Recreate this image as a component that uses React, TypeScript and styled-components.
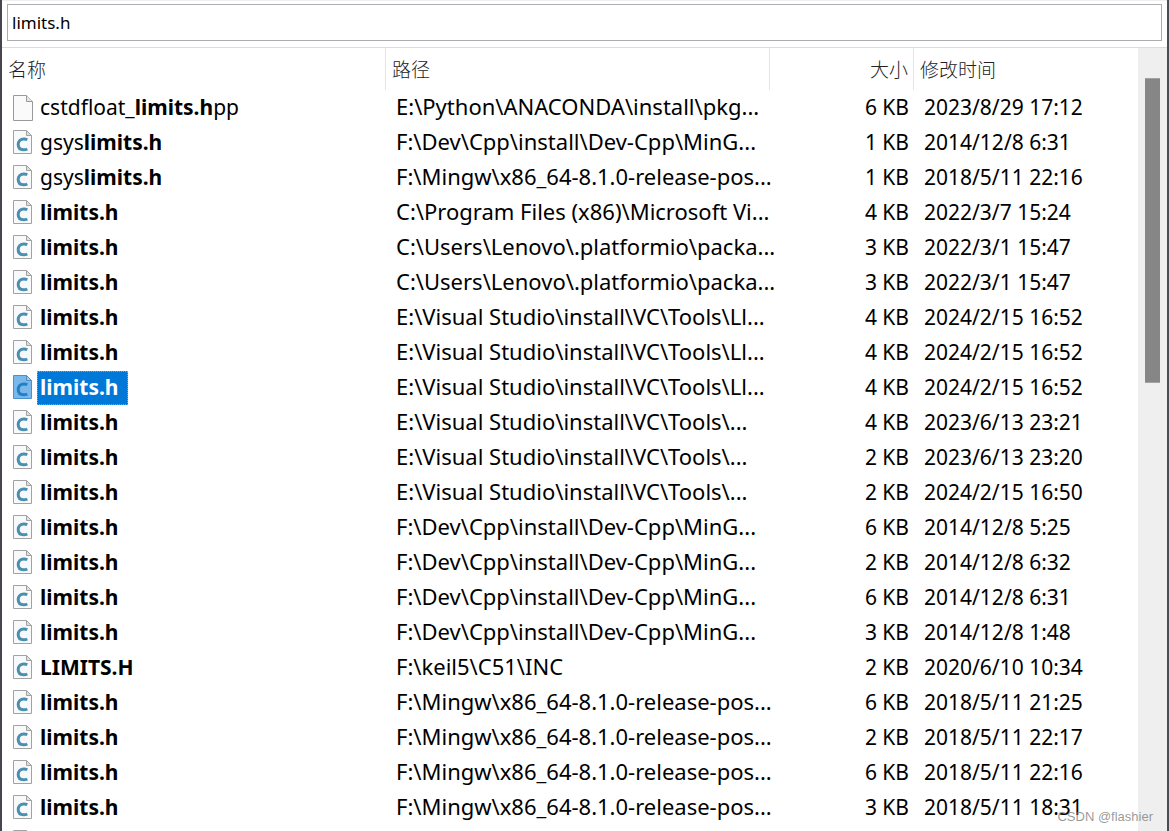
import React, { useState } from 'react';
import styled, { createGlobalStyle } from 'styled-components';

const GlobalStyle = createGlobalStyle`
  * { box-sizing: border-box; }
  body {
    margin: 0;
    background: #fff;
    color: #000;
    font-family: "Noto Sans", "Noto Sans CJK SC", sans-serif;
  }
`;

const Window = styled.div`
  height: 100vh;
  overflow: hidden;
  display: flex;
  flex-direction: column;
  background: #fff;
  border-left: 2px solid #46474c;
  border-right: 2px solid #4b4c54;
`;

const SearchBar = styled.div`
  flex: none;
  padding: 3px 5px 6px;
  border-top: 1px solid #efefef;
  border-bottom: 1px solid #dcdcdc;
`;

const SearchInput = styled.input`
  display: block;
  width: 100%;
  height: 37px;
  padding: 0 4px;
  border: 1px solid #abadb3;
  border-radius: 0;
  outline: none;
  background: #fff;
  color: #000;
  font: 17px "Noto Sans", sans-serif;
`;

const Results = styled.div`
  flex: 1;
  min-height: 0;
  display: flex;
`;

const ListPane = styled.div`
  flex: 1;
  min-width: 0;
  overflow: hidden;
`;

const FileTable = styled.table`
  width: 100%;
  table-layout: fixed;
  border-collapse: separate;
  border-spacing: 0;
`;

const HeaderCell = styled.th<{ $width?: string; $end?: boolean }>`
  width: ${(p) => p.$width ?? 'auto'};
  height: 42px;
  padding: 0 5px 0 6px;
  border-right: ${(p) => (p.$width ? '1px solid #e5e5e5' : '0')};
  color: #222;
  font-family: "Noto Sans CJK SC", sans-serif;
  font-size: 19px;
  font-weight: 300;
  line-height: 24px;
  text-align: ${(p) => (p.$end ? 'right' : 'left')};
`;

const Row = styled.tr`
  height: 35px;
`;

const cellPadding = {
  name: '0 4px 0 11px',
  path: '0 5px 4px 10px',
  size: '0 5px 2px 10px',
  date: '0 5px 2px 10px',
};

const Cell = styled.td<{ $kind: keyof typeof cellPadding }>`
  height: 35px;
  padding: ${(p) => cellPadding[p.$kind]};
  font-size: ${(p) => (p.$kind === 'path' ? '22px' : '21px')};
  line-height: ${(p) => (p.$kind === 'path' ? '30px' : '32px')};
  white-space: nowrap;
  text-align: ${(p) => (p.$kind === 'size' ? 'right' : 'left')};
`;

const NameLine = styled.div`
  display: flex;
  align-items: center;
  gap: 3px;
`;

const FileName = styled.span<{ $selected?: boolean }>`
  height: 34px;
  padding: 0 9px 0 3px;
  line-height: 32px;
  color: ${(p) => (p.$selected ? '#fff' : '#000')};
  background: ${(p) => (p.$selected ? '#0078d7' : 'transparent')};
  outline: ${(p) => (p.$selected ? '1px dotted #ff8728' : 'none')};
  outline-offset: -1px;
`;

const IconSvg = styled.svg`
  display: block;
  flex: none;
`;

const ScrollTrack = styled.div`
  flex: none;
  width: 29px;
  padding: 30px 7px 0;
  background: #efefef;
`;

const ScrollThumb = styled.div`
  height: 305px;
  background: #868686;
  border-top: 1px solid #a2a2a2;
  border-bottom: 1px solid #a2a2a2;
`;

const Watermark = styled.span`
  position: absolute;
  right: 16px;
  bottom: 5px;
  color: rgba(120, 120, 120, 0.75);
  font: 13px/18px "Liberation Sans", sans-serif;
`;

function FileIcon({ plain, selected }: { plain?: boolean; selected?: boolean }) {
  if (plain) {
    return (
      <IconSvg width="21" height="26" viewBox="0 0 21 26" aria-hidden="true">
        <path d="M.5.5h13l6 6v19H.5z" fill="#fafafa" stroke="#999" />
        <path d="M13.5.5v6h6" fill="#e6e6e6" stroke="#999" />
      </IconSvg>
    );
  }
  const edge = selected ? '#4a90cb' : '#a2a2a2';
  return (
    <IconSvg width="21" height="25" viewBox="0 0 21 25" aria-hidden="true">
      <path d="M.5.5h13l5 5v18H.5z" fill={selected ? '#7ab8eb' : '#f7f9fb'} stroke={edge} />
      <path d="M13.5.5v5h5z" fill={selected ? '#9ccaf0' : '#e0e0e0'} stroke={edge} />
      <path
        d="M14.300 9.700Q12.800 8.900 10.900 8.900C7.400 8.900 5.200 11.200 5.200 14.600C5.200 17.900 7.300 19.800 10.600 19.800Q12.800 19.800 14.300 19"
        fill="none"
        stroke={selected ? '#2380c3' : '#4b8fb0'}
        strokeWidth="3"
      />
    </IconSvg>
  );
}

type FileEntry = {
  before?: string;
  match: string;
  after?: string;
  path: string;
  size: string;
  date: string;
};

const entry = (path: string, size: string, date: string, match = 'limits.h', before = '', after = ''): FileEntry => ({
  before,
  match,
  after,
  path,
  size,
  date,
});

const PKG = 'E:\\Python\\ANACONDA\\install\\pkg...';
const DEV = 'F:\\Dev\\Cpp\\install\\Dev-Cpp\\MinG...';
const MINGW = 'F:\\Mingw\\x86_64-8.1.0-release-pos...';
const PIO = 'C:\\Users\\Lenovo\\.platformio\\packa...';
const LLVM = 'E:\\Visual Studio\\install\\VC\\Tools\\Ll...';
const TOOLS = 'E:\\Visual Studio\\install\\VC\\Tools\\...';

const files: FileEntry[] = [
  entry(PKG, '6 KB', '2023/8/29 17:12', 'limits.h', 'cstdfloat_', 'pp'),
  entry(DEV, '1 KB', '2014/12/8 6:31', 'limits.h', 'gsys'),
  entry(MINGW, '1 KB', '2018/5/11 22:16', 'limits.h', 'gsys'),
  entry('C:\\Program Files (x86)\\Microsoft Vi...', '4 KB', '2022/3/7 15:24'),
  entry(PIO, '3 KB', '2022/3/1 15:47'),
  entry(PIO, '3 KB', '2022/3/1 15:47'),
  entry(LLVM, '4 KB', '2024/2/15 16:52'),
  entry(LLVM, '4 KB', '2024/2/15 16:52'),
  entry(LLVM, '4 KB', '2024/2/15 16:52'),
  entry(TOOLS, '4 KB', '2023/6/13 23:21'),
  entry(TOOLS, '2 KB', '2023/6/13 23:20'),
  entry(TOOLS, '2 KB', '2024/2/15 16:50'),
  entry(DEV, '6 KB', '2014/12/8 5:25'),
  entry(DEV, '2 KB', '2014/12/8 6:32'),
  entry(DEV, '6 KB', '2014/12/8 6:31'),
  entry(DEV, '3 KB', '2014/12/8 1:48'),
  entry('F:\\keil5\\C51\\INC', '2 KB', '2020/6/10 10:34', 'LIMITS.H'),
  entry(MINGW, '6 KB', '2018/5/11 21:25'),
  entry(MINGW, '2 KB', '2018/5/11 22:17'),
  entry(MINGW, '6 KB', '2018/5/11 22:16'),
  entry(MINGW, '3 KB', '2018/5/11 18:31'),
];

export default function App() {
  const [query, setQuery] = useState('limits.h');
  const [selected, setSelected] = useState(8);

  return (
    <Window>
      <GlobalStyle />
      <SearchBar>
        <SearchInput aria-label="Search" value={query} onChange={(e) => setQuery(e.target.value)} />
      </SearchBar>
      <Results>
        <ListPane>
          <FileTable>
            <thead>
              <tr>
                <HeaderCell $width="384px">名称</HeaderCell>
                <HeaderCell $width="384px">路径</HeaderCell>
                <HeaderCell $width="144px" $end>大小</HeaderCell>
                <HeaderCell>修改时间</HeaderCell>
              </tr>
            </thead>
            <tbody>
              {files.map((f, i) => (
                <Row key={i} onClick={() => setSelected(i)}>
                  <Cell $kind="name">
                    <NameLine>
                      <FileIcon plain={Boolean(f.after)} selected={i === selected} />
                      <FileName $selected={i === selected}>
                        {f.before}
                        <b>{f.match}</b>
                        {f.after}
                      </FileName>
                    </NameLine>
                  </Cell>
                  <Cell $kind="path">{f.path}</Cell>
                  <Cell $kind="size">{f.size}</Cell>
                  <Cell $kind="date">{f.date}</Cell>
                </Row>
              ))}
              <Row>
                <Cell $kind="name" colSpan={4}>
                  <FileIcon />
                </Cell>
              </Row>
            </tbody>
          </FileTable>
        </ListPane>
        <ScrollTrack>
          <ScrollThumb />
        </ScrollTrack>
      </Results>
      <Watermark>CSDN @flashier</Watermark>
    </Window>
  );
}
